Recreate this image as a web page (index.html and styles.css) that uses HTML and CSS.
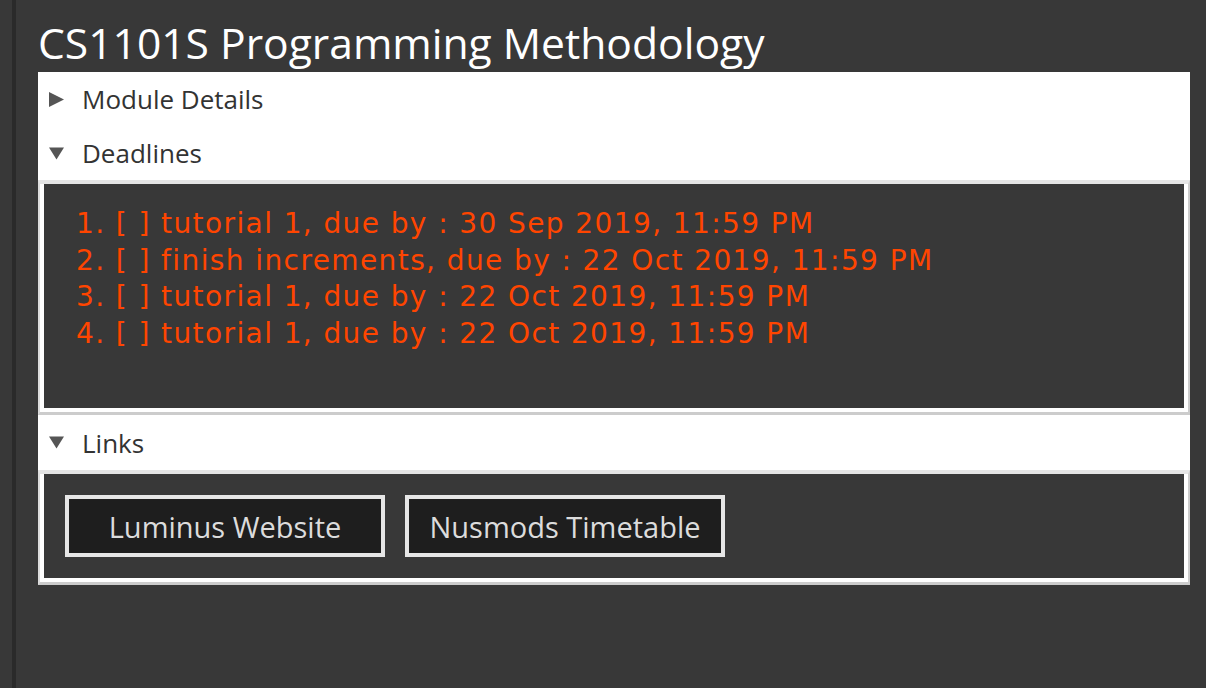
FILE: index.html
```html
<!DOCTYPE html>
<html>
<head>
<meta charset="utf-8">
<link rel="stylesheet" href="styles.css">
</head>
<body>
<div class="app">
  <div class="strip"></div>
  <main class="module">
    <h1 class="title">CS1101S Programming Methodology</h1>
    <section class="pane">
      <div class="pane-head">
        <svg class="arrow" width="15" height="15" viewBox="0 0 15 15"><polygon points="0,0 15,7.5 0,15" fill="#555"/></svg>
        <span>Module Details</span>
      </div>
      <div class="pane-head">
        <svg class="arrow" width="15" height="15" viewBox="0 0 15 15"><polygon points="0,1.5 15,1.5 7.5,13.5" fill="#555"/></svg>
        <span>Deadlines</span>
      </div>
      <div class="pane-body">
        <div class="pane-inner deadlines">
          <div class="deadline">1. [ ] tutorial 1, due by : 30 Sep 2019, 11:59 PM</div>
          <div class="deadline">2. [ ] finish increments, due by : 22 Oct 2019, 11:59 PM</div>
          <div class="deadline">3. [ ] tutorial 1, due by : 22 Oct 2019, 11:59 PM</div>
          <div class="deadline">4. [ ] tutorial 1, due by : 22 Oct 2019, 11:59 PM</div>
        </div>
      </div>
      <div class="pane-head links-head">
        <svg class="arrow" width="15" height="15" viewBox="0 0 15 15"><polygon points="0,1.5 15,1.5 7.5,13.5" fill="#555"/></svg>
        <span>Links</span>
      </div>
      <div class="pane-body">
        <div class="pane-inner links">
          <button class="link-btn">Luminus Website</button>
          <button class="link-btn">Nusmods Timetable</button>
        </div>
      </div>
    </section>
  </main>
</div>
</body>
</html>
```
FILE: styles.css
```css
* { box-sizing: border-box; }
html, body { margin: 0; padding: 0; }
body {
  background: #383838;
  width: 1206px;
  height: 688px;
  overflow: hidden;
  font-family: "Open Sans", "Noto Sans", sans-serif;
}
.app {
  display: flex;
  height: 688px;
}
.strip {
  width: 4px;
  margin-left: 12px;
  background: #2a2a2a;
  flex: none;
}
.module {
  margin-left: 22px;
  width: 1152px;
}
.title {
  margin: 0;
  height: 72px;
  padding-top: 16px;
  font-weight: 400;
  font-size: 42.6px;
  line-height: 52px;
  color: #ffffff;
  padding-left: 0;
  white-space: nowrap;
}
.pane {
  background: #ffffff;
}
.pane-head {
  display: flex;
  align-items: center;
  height: 54px;
  padding-left: 11px;
  font-size: 26px;
  color: #333333;
}
.links-head { height: 55px; }
.arrow { flex: none; margin-right: 18px; }
.pane-body {
  border-top: 4px solid #e4e4e4;
  border-left: 2px solid #dcdcdc;
  border-right: 2px solid #cccccc;
  border-bottom: 3px solid #cccccc;
  background: #383838;
}
.pane-inner {
  border: 4px solid #ffffff;
  border-top: none;
  background: #383838;
}
.deadlines {
  height: 228px;
  padding: 22px 0 0 32px;
  font-family: "DejaVu Sans", Verdana, sans-serif;
  font-size: 28px;
  letter-spacing: 1.4px;
  line-height: 36.7px;
  color: #ff4500;
}
.deadline { white-space: nowrap; }
.links {
  height: 108px;
  display: flex;
  gap: 20px;
  padding: 21px;
}
.link-btn {
  width: 320px;
  height: 62px;
  background: #1e1e1e;
  border: 4px solid #e6e6e6;
  color: #dcdcdc;
  font-family: "Open Sans", "Noto Sans", sans-serif;
  font-size: 29px;
  padding: 0;
}
```
